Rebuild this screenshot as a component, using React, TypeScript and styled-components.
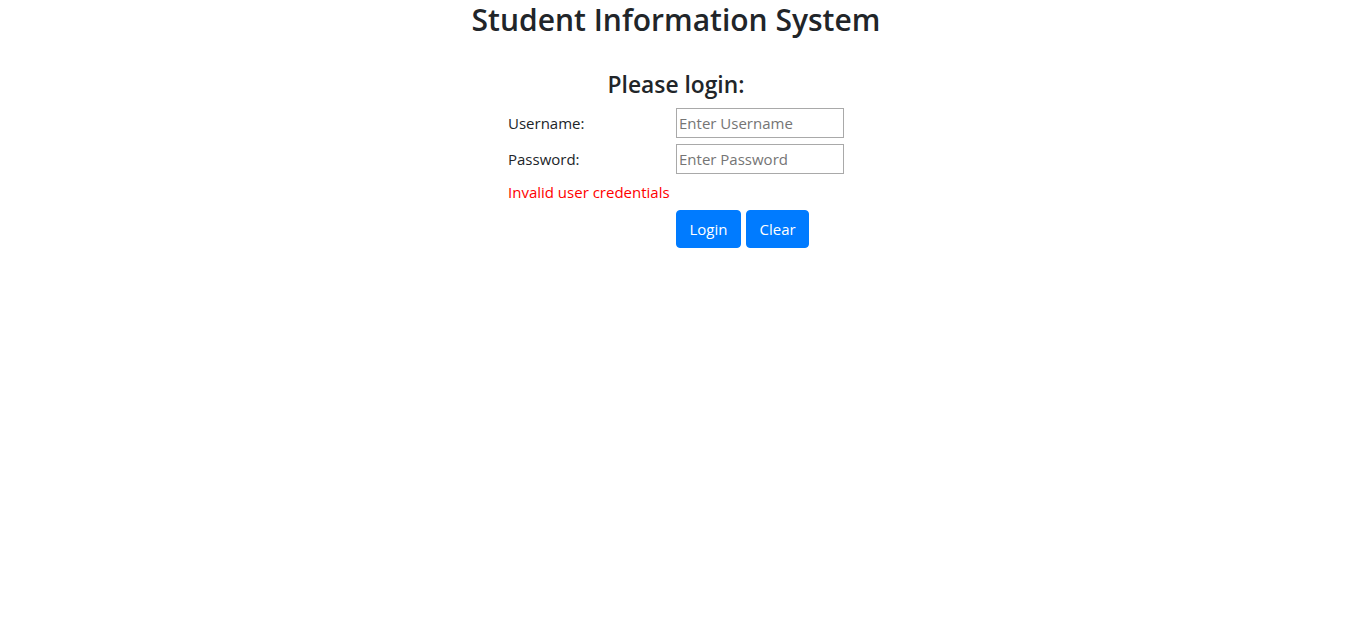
import styled, { createGlobalStyle } from "styled-components";

const GlobalStyle = createGlobalStyle`
  body {
    margin: 0;
    background: #fff;
    color: #212529;
    font-family: "Open Sans", "Noto Sans", sans-serif;
    font-size: 15px;
  }
`;

const Page = styled.div`
  display: flex;
  flex-direction: column;
  align-items: center;
  padding-right: 6px;
`;

const Title = styled.h1`
  margin: 1px 0 31px;
  font-size: 30px;
  font-weight: 600;
  line-height: 38px;
`;

const Subtitle = styled.h2`
  margin: 0 0 6px;
  font-size: 22.8px;
  font-weight: 600;
  line-height: 29px;
`;

const Form = styled.form`
  display: grid;
  grid-template-columns: 168px 168px;
`;

const Cell = styled.div<{ $span?: boolean }>`
  padding: 3px 0;
  display: flex;
  align-items: center;
  grid-column: ${(p) => (p.$span ? "1 / span 2" : "auto")};
`;

const Label = styled.label`
  font-size: 15px;
  line-height: 24px;
`;

const Input = styled.input`
  box-sizing: border-box;
  width: 168px;
  height: 30px;
  padding: 1px 2px;
  border: 1px solid #a9a9a9;
  font-family: inherit;
  font-size: 15px;
  color: #212529;
  &::placeholder {
    color: #757575;
  }
`;

const Error = styled.span`
  color: #ff0000;
  font-size: 15px;
  line-height: 24px;
`;

const Buttons = styled.div`
  display: flex;
  gap: 5px;
`;

const Button = styled.button`
  height: 38px;
  padding: 0 12.5px;
  border: 1px solid #007bff;
  border-radius: 4px;
  background: #007bff;
  color: #fff;
  font-family: inherit;
  font-size: 15px;
  cursor: pointer;
`;

export default function App() {
  return (
    <>
      <GlobalStyle />
      <Page>
        <Title>Student Information System</Title>
        <Subtitle>Please login:</Subtitle>
        <Form onSubmit={(e) => e.preventDefault()}>
          <Cell>
            <Label htmlFor="username">Username:</Label>
          </Cell>
          <Cell>
            <Input id="username" placeholder="Enter Username" />
          </Cell>
          <Cell>
            <Label htmlFor="password">Password:</Label>
          </Cell>
          <Cell>
            <Input id="password" type="password" placeholder="Enter Password" />
          </Cell>
          <Cell $span>
            <Error>Invalid user credentials</Error>
          </Cell>
          <Cell />
          <Cell>
            <Buttons>
              <Button type="submit">Login</Button>
              <Button type="button">Clear</Button>
            </Buttons>
          </Cell>
        </Form>
      </Page>
    </>
  );
}
